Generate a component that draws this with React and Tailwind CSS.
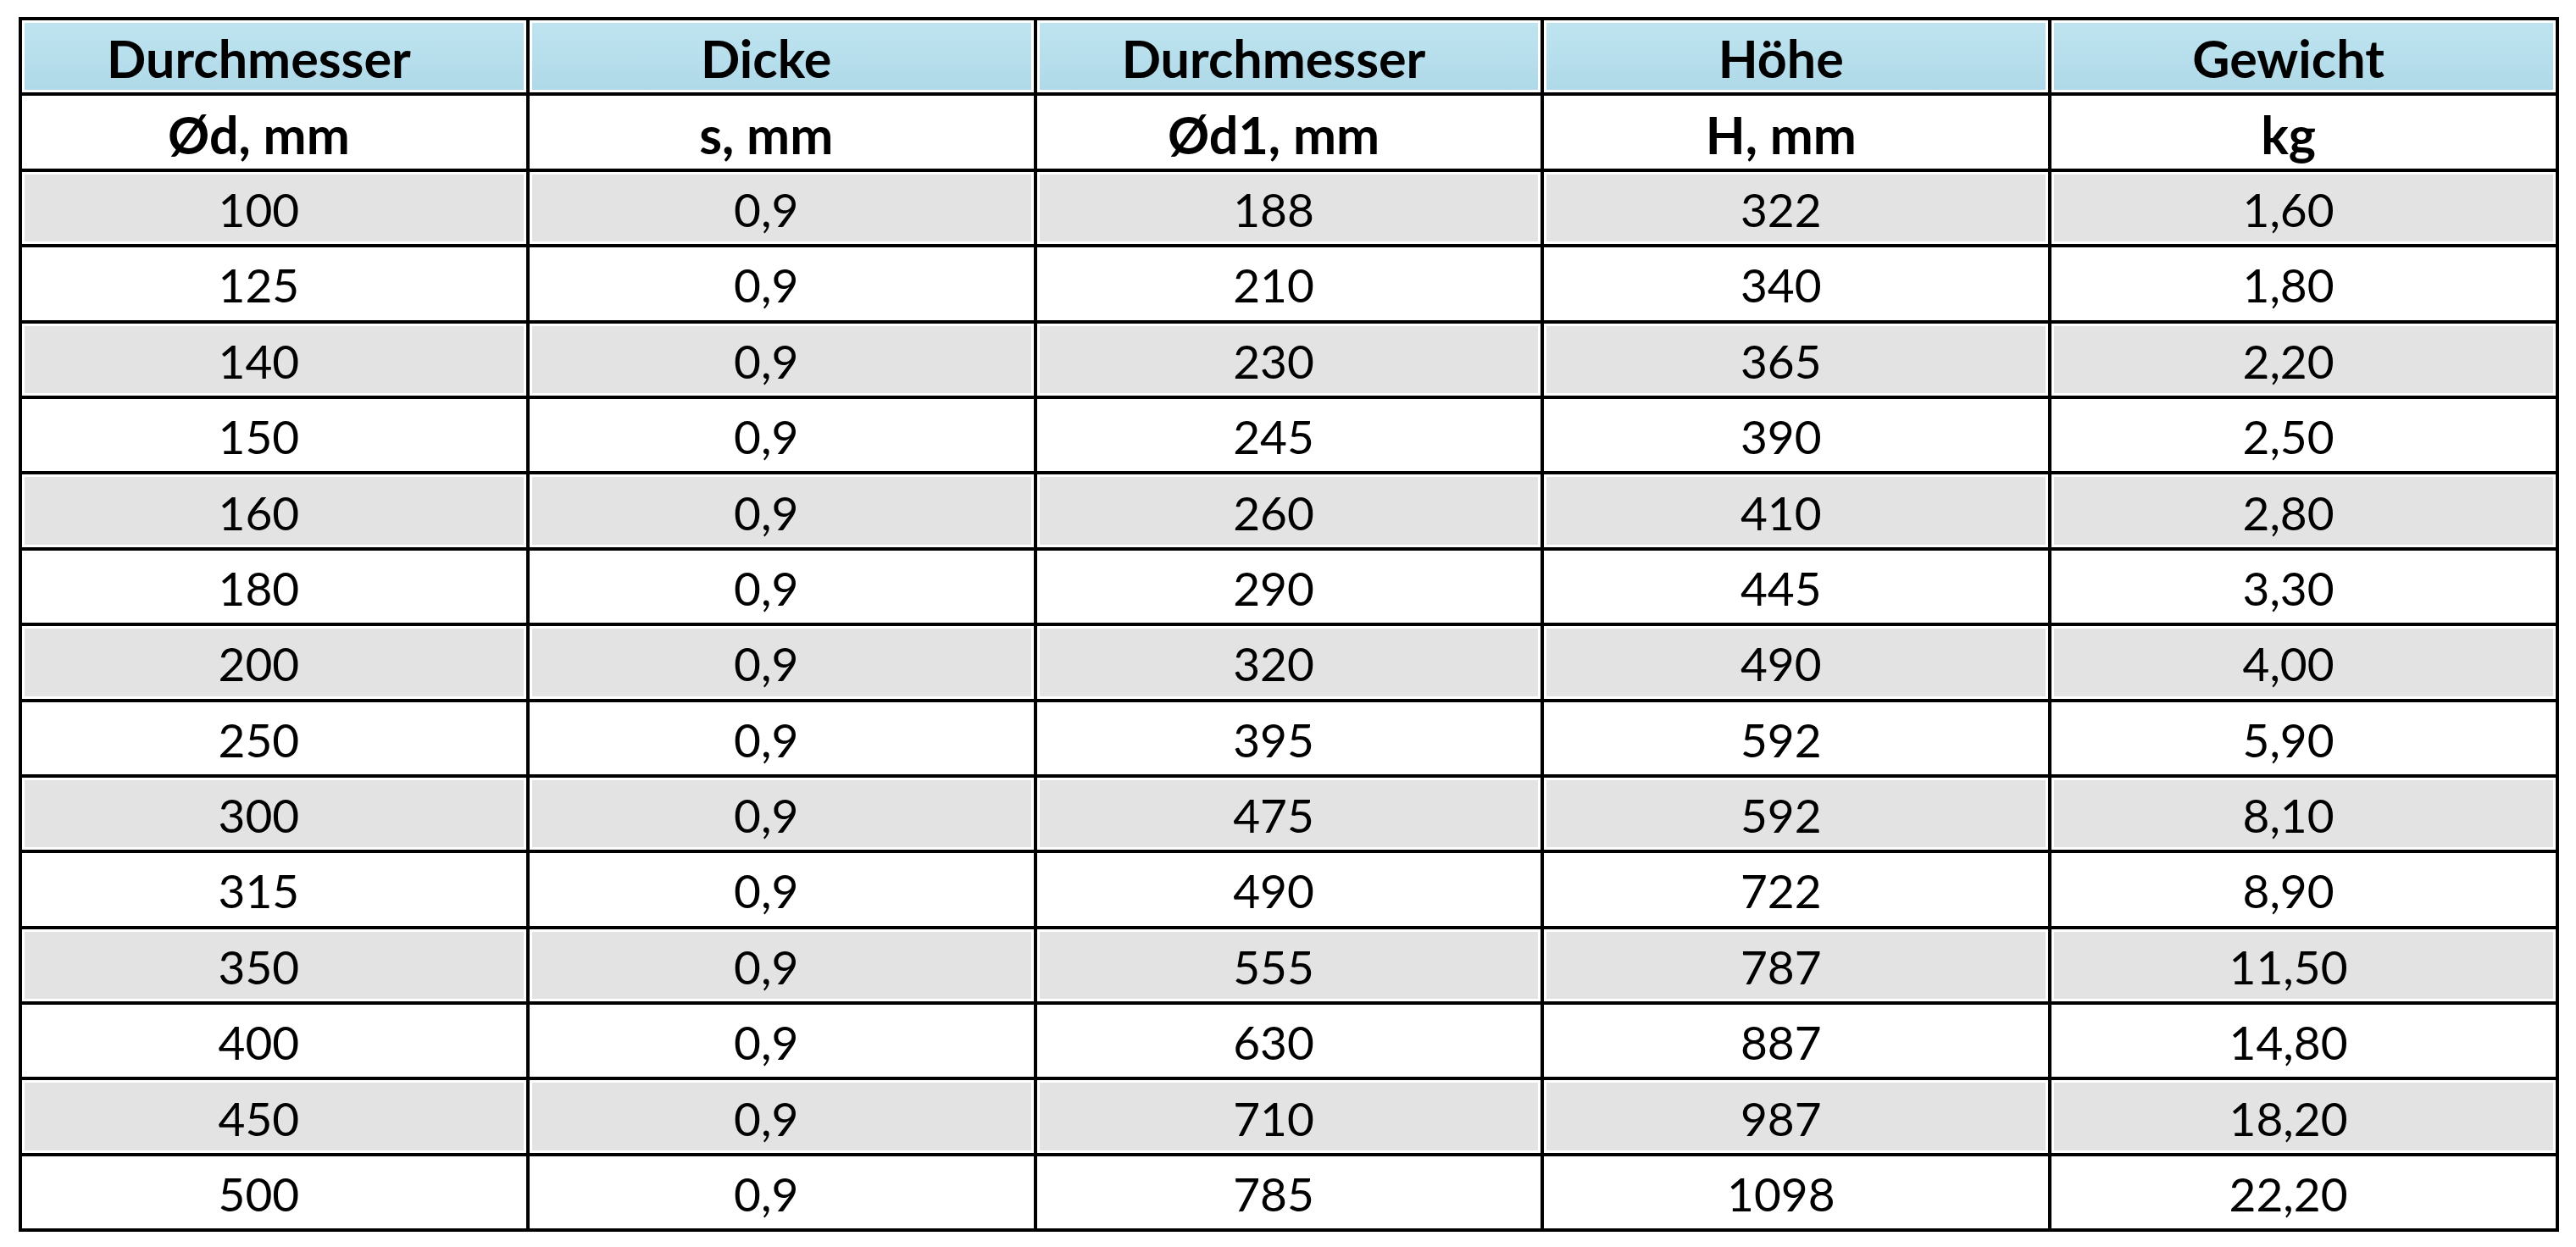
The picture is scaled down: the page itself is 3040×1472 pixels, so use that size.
import React from 'react';

const head1 = ['Durchmesser', 'Dicke', 'Durchmesser', 'Höhe', 'Gewicht'];
const head2 = ['Ød, mm', 's, mm', 'Ød1, mm', 'H, mm', 'kg'];

const rows = [
  ['100', '0,9', '188', '322', '1,60'],
  ['125', '0,9', '210', '340', '1,80'],
  ['140', '0,9', '230', '365', '2,20'],
  ['150', '0,9', '245', '390', '2,50'],
  ['160', '0,9', '260', '410', '2,80'],
  ['180', '0,9', '290', '445', '3,30'],
  ['200', '0,9', '320', '490', '4,00'],
  ['250', '0,9', '395', '592', '5,90'],
  ['300', '0,9', '475', '592', '8,10'],
  ['315', '0,9', '490', '722', '8,90'],
  ['350', '0,9', '555', '787', '11,50'],
  ['400', '0,9', '630', '887', '14,80'],
  ['450', '0,9', '710', '987', '18,20'],
  ['500', '0,9', '785', '1098', '22,20'],
];

function Cell({ children, tone, bold }) {
  const bg =
    tone === 'blue'
      ? 'bg-gradient-to-b from-[#bfe4f0] to-[#afd9e8]'
      : tone === 'gray'
      ? 'bg-[#e3e3e3]'
      : 'bg-white';
  return (
    <div className="bg-white p-[3px]">
      <div
        className={`${bg} h-full flex items-center justify-center pt-[4px] pr-[36px] text-black ${
          bold ? 'font-bold text-[61px]' : 'text-[55px]'
        }`}
      >
        {children}
      </div>
    </div>
  );
}

export default function App() {
  return (
    <div className="min-h-screen bg-white pl-[22px] pt-[20px]" style={{ fontFamily: 'Lato, "Open Sans", sans-serif' }}>
      <div className="w-[2998px] grid grid-cols-5 auto-rows-[85.4px] gap-[4px] p-[4px] bg-black leading-none">
        {head1.map((h, i) => (
          <Cell key={'a' + i} tone="blue" bold>{h}</Cell>
        ))}
        {head2.map((h, i) => (
          <Cell key={'b' + i} tone="white" bold>{h}</Cell>
        ))}
        {rows.map((r, ri) =>
          r.map((v, ci) => (
            <Cell key={ri + '-' + ci} tone={ri % 2 === 0 ? 'gray' : 'white'}>{v}</Cell>
          ))
        )}
      </div>
    </div>
  );
}
